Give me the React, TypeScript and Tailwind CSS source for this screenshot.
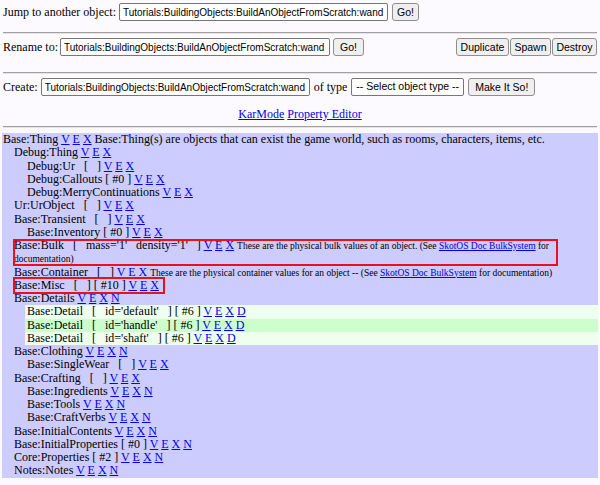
import React from "react";

type Row = {
  lvl: 0 | 1 | 2;
  name: string;
  links: string;
  desc?: React.ReactNode;
  bg?: string;
};

const Lnk = ({ children }: { children: React.ReactNode }) => (
  <a href="#" className="text-[#0000ee] underline">
    {children}
  </a>
);

const smallBulk = (
  <span className="text-[9.5px] leading-[9px]">
    These are the physical bulk values of an object. (See <Lnk>SkotOS Doc BulkSystem</Lnk> for documentation)
  </span>
);
const smallCont = (
  <span className="text-[9.5px] leading-[9px]">
    These are the physical container values for an object -- (See <Lnk>SkotOS Doc BulkSystem</Lnk> for documentation)
  </span>
);

const rows: Row[] = [
  { lvl: 0, name: "Base:Thing", links: "VEX", desc: "Base:Thing(s) are objects that can exist the game world, such as rooms, characters, items, etc." },
  { lvl: 1, name: "Debug:Thing", links: "VEX" },
  { lvl: 2, name: "Debug:Ur   [   ]", links: "VEX" },
  { lvl: 2, name: "Debug:Callouts [ #0 ]", links: "VEX" },
  { lvl: 2, name: "Debug:MerryContinuations", links: "VEX" },
  { lvl: 1, name: "Ur:UrObject   [   ]", links: "VEX" },
  { lvl: 1, name: "Base:Transient   [   ]", links: "VEX" },
  { lvl: 2, name: "Base:Inventory [ #0 ]", links: "VEX" },
  { lvl: 1, name: "Base:Bulk   [   mass='1'   density='1'   ]", links: "VEX", desc: smallBulk },
  { lvl: 1, name: "Base:Container   [   ]", links: "VEX", desc: smallCont },
  { lvl: 1, name: "Base:Misc   [   ] [ #10 ]", links: "VEX" },
  { lvl: 1, name: "Base:Details", links: "VEXN" },
  { lvl: 2, name: "Base:Detail   [   id='default'   ] [ #6 ]", links: "VEXD", bg: "a" },
  { lvl: 2, name: "Base:Detail   [   id='handle'   ] [ #6 ]", links: "VEXD", bg: "b" },
  { lvl: 2, name: "Base:Detail   [   id='shaft'   ] [ #6 ]", links: "VEXD", bg: "a" },
  { lvl: 1, name: "Base:Clothing", links: "VEXN" },
  { lvl: 2, name: "Base:SingleWear   [   ]", links: "VEX" },
  { lvl: 1, name: "Base:Crafting   [   ]", links: "VEX" },
  { lvl: 2, name: "Base:Ingredients", links: "VEXN" },
  { lvl: 2, name: "Base:Tools", links: "VEXN" },
  { lvl: 2, name: "Base:CraftVerbs", links: "VEXN" },
  { lvl: 1, name: "Base:InitialContents", links: "VEXN" },
  { lvl: 1, name: "Base:InitialProperties [ #0 ]", links: "VEXN" },
  { lvl: 1, name: "Core:Properties [ #2 ]", links: "VEXN" },
  { lvl: 1, name: "Notes:Notes", links: "VEXN" },
];

const lvlCls = ["pl-[1px]", "ml-[11px] pl-[1px]", "ml-[23px] pl-[2px]"];
const bgCls: Record<string, string> = { a: "bg-[#eeffee]", b: "bg-[#ccffcc]" };

const Btn = ({ children, className = "" }: { children: React.ReactNode; className?: string }) => (
  <button
    className={
      "h-[18px] border border-[#8f8f8f] rounded-[3px] bg-[#efefef] text-[10.5px] leading-none text-black whitespace-nowrap font-['Liberation_Sans',Arial,sans-serif] " +
      className
    }
  >
    {children}
  </button>
);

const Inp = ({ w }: { w: string }) => (
  <input
    readOnly
    value="Tutorials:BuildingObjects:BuildAnObjectFromScratch:wand"
    className={
      "h-[18px] px-[3px] border border-[#767676] rounded-[2px] bg-white text-[10px] text-black font-['Liberation_Sans',Arial,sans-serif] " +
      w
    }
  />
);

const Hr = () => <div className="mx-[3px] border-t border-t-[#a0a0a0] border-b border-b-[#e4e4e4]" />;

export default function App() {
  return (
    <div className="min-h-[485px] w-[600px] bg-[#fdfaff] text-black font-['Liberation_Serif','Times_New_Roman',serif] text-[12px]">
      <div className="pt-[3px]">
        <div className="flex items-center h-[18px] px-[3px]">
          <span className="mr-[3px]">Jump to another object:</span>
          <Inp w="w-[269px]" />
          <Btn className="ml-[4px] w-[27px]">Go!</Btn>
        </div>
        <div className="mt-[11px]">
          <Hr />
        </div>
        <div className="mt-[4px] flex items-center h-[18px] px-[3px]">
          <span className="mr-[2px]">Rename to:</span>
          <Inp w="w-[270px]" />
          <Btn className="ml-[3px] w-[31px]">Go!</Btn>
          <div className="ml-auto flex">
            <Btn className="w-[53px]">Duplicate</Btn>
            <Btn className="ml-[1px] w-[41px]">Spawn</Btn>
            <Btn className="ml-[1px] w-[45px]">Destroy</Btn>
          </div>
        </div>
        <div className="mt-[16px]">
          <Hr />
        </div>
        <div className="mt-[4px] flex items-center h-[18px] px-[3px]">
          <span className="mr-[3px]">Create:</span>
          <Inp w="w-[269px]" />
          <span className="mx-[4px]">of type</span>
          <div className="h-[18px] w-[113px] border border-[#767676] rounded-[2px] bg-white flex items-center pl-[4px] pr-[3px] text-[10.5px] whitespace-nowrap font-['Liberation_Sans',Arial,sans-serif]">
            <span className="flex-1">-- Select object type --</span>
            <svg width="9" height="6" viewBox="0 0 9 6">
              <path d="M1 1 L4.5 4.5 L8 1" fill="none" stroke="black" strokeWidth="1.5" />
            </svg>
          </div>
          <Btn className="ml-[4px] w-[67px]">Make It So!</Btn>
        </div>
        <div className="mt-[11px] text-center leading-[14px]">
          <Lnk>KarMode</Lnk> <Lnk>Property Editor</Lnk>
        </div>
        <div className="mt-[5px]">
          <Hr />
        </div>
        <div className="relative mt-[5px] mx-[2px] bg-[#ccccff] leading-[13.25px]">
          {rows.map((r, i) => (
            <div key={i} className={lvlCls[r.lvl] + " " + (r.bg ? bgCls[r.bg] : "")}>
              <span className="whitespace-pre">{r.name} </span>
              {r.links.split("").map((c, j) => (
                <React.Fragment key={j}>
                  <Lnk>{c}</Lnk>{" "}
                </React.Fragment>
              ))}
              {r.desc}
            </div>
          ))}
          <div className="absolute left-[11px] top-[106px] w-[545px] h-[27px] border-2 border-[#e8121e]" />
          <div className="absolute left-[11px] top-[144px] w-[152px] h-[17px] border-2 border-[#e8121e]" />
        </div>
      </div>
    </div>
  );
}
